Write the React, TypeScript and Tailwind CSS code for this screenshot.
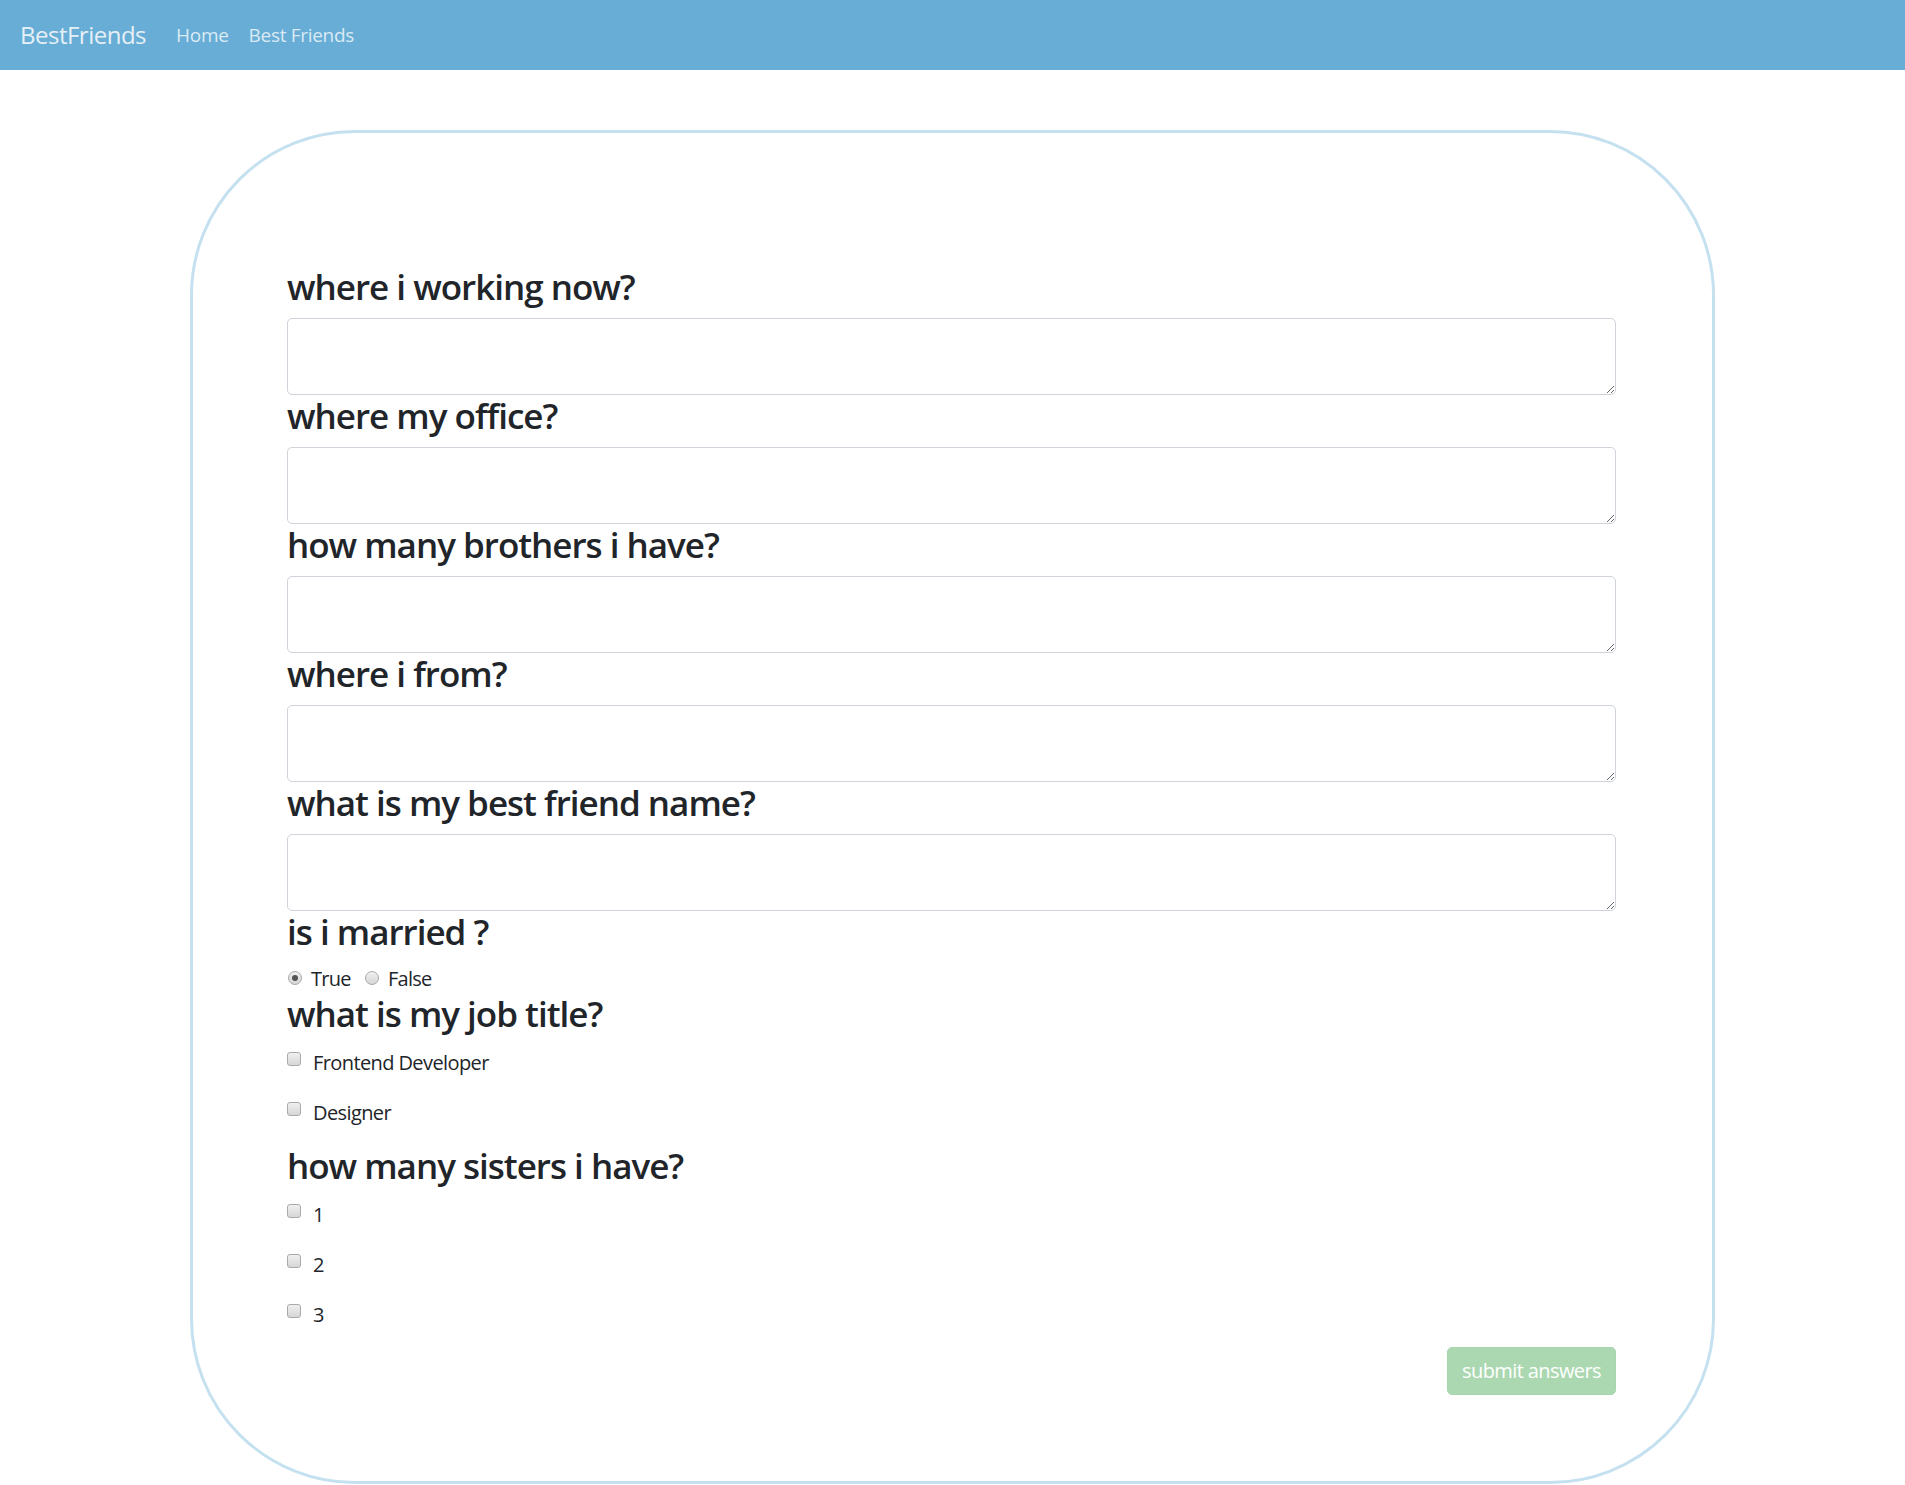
import React from "react";

const font = { fontFamily: '"Open Sans", "Noto Sans", sans-serif' };

function Heading({ children }: { children: React.ReactNode }) {
  return (
    <h3 className="m-0 mb-[10px] h-[42px] text-[35px] leading-[42px] font-[560] text-[#212529] tracking-[-1px]">
      {children}
    </h3>
  );
}

function Area() {
  return (
    <textarea
      rows={2}
      className="block w-full h-[77px] rounded-[5px] border border-[#ced4da] bg-white px-[15px] py-[7px] text-[20px] leading-[30px] text-[#495057] outline-none"
    />
  );
}

function Check({ label }: { label: string }) {
  return (
    <div className="relative h-[30px] mb-[20px] pl-[26px]">
      <span className="absolute left-0 top-[7px] w-[14px] h-[14px] rounded-[3px] border border-[#a9a9a9] bg-gradient-to-b from-[#f0f0f0] to-[#d6d6d6]" />
      <span className="block pt-[3px] text-[20px] leading-[30px] text-[#212529] tracking-[-0.6px]">{label}</span>
    </div>
  );
}

function Radio({ label, checked }: { label: string; checked?: boolean }) {
  return (
    <div className="flex items-center mr-[14px]">
      <span className="relative w-[14px] h-[14px] rounded-full border border-[#a9a9a9] bg-gradient-to-b from-[#f0f0f0] to-[#d6d6d6] flex items-center justify-center mr-[9px]">
        {checked && <span className="w-[6px] h-[6px] rounded-full bg-[#555]" />}
      </span>
      <span className="pt-[2px] text-[20px] leading-[30px] text-[#212529] tracking-[-0.7px]">{label}</span>
    </div>
  );
}

export default function App() {
  return (
    <div className="min-h-[1485px] bg-white" style={font}>
      <nav className="h-[70px] bg-[#67add6] flex items-center px-[20px]">
        <span className="text-[24px] text-[#e6eff5] tracking-[-0.5px] mr-[30px]">BestFriends</span>
        <span className="text-[19px] text-[#dbeaf4] tracking-[-0.3px] mr-[20px]">Home</span>
        <span className="text-[19px] text-[#dbeaf4] tracking-[-0.3px]">Best Friends</span>
      </nav>
      <div className="mt-[60px] mx-auto w-[1525px] h-[1354px] border-[3px] border-[#c5e1f0] rounded-[165px] pl-[94px] pr-[96px] pt-[133px]">
        <Heading>where i working now?</Heading>
        <Area />
        <Heading>where my office?</Heading>
        <Area />
        <Heading>how many brothers i have?</Heading>
        <Area />
        <Heading>where i from?</Heading>
        <Area />
        <Heading>what is my best friend name?</Heading>
        <Area />
        <Heading>is i married ?</Heading>
        <div className="flex items-center h-[30px] pl-[1px]">
          <Radio label="True" checked />
          <Radio label="False" />
        </div>
        <Heading>what is my job title?</Heading>
        <Check label="Frontend Developer" />
        <Check label="Designer" />
        <Heading>how many sisters i have?</Heading>
        <Check label="1" />
        <Check label="2" />
        <Check label="3" />
        <div className="flex justify-end">
          <button className="h-[48px] w-[169px] rounded-[5px] bg-[#abd8b1] border border-[#a6d6ad] text-white text-[20px] tracking-[-0.6px]">
            submit answers
          </button>
        </div>
      </div>
    </div>
  );
}
